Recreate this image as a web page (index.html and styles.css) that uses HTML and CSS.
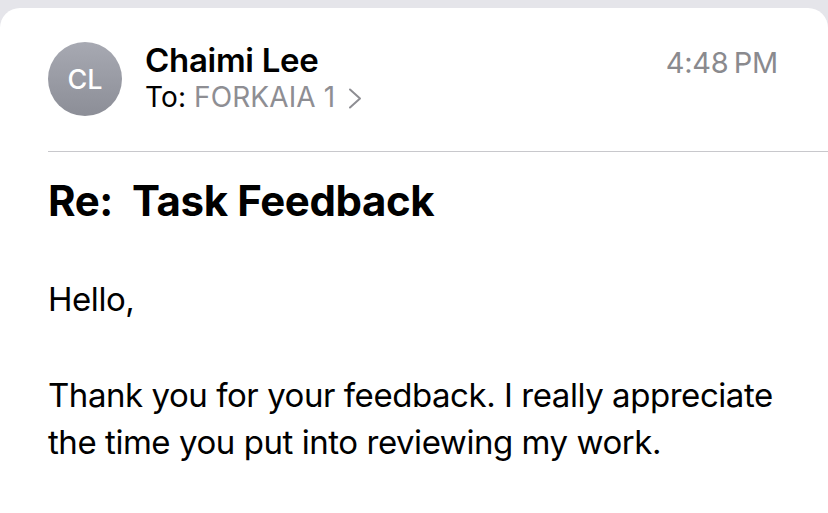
FILE: index.html
```html
<!DOCTYPE html>
<html>
<head>
<meta charset="utf-8">
<link rel="stylesheet" href="styles.css">
</head>
<body>
<div class="card">
  <div class="header">
    <div class="avatar">CL</div>
    <div class="meta">
      <div class="name">Chaimi Lee</div>
      <div class="to">To: <span class="recipient">FORKAIA 1</span><svg class="chev" width="14" height="21" viewBox="0 0 14 21"><path d="M2 1.5 L12 10.5 L2 19.5" fill="none" stroke="#8e8e93" stroke-width="2" stroke-linecap="round" stroke-linejoin="round"/></svg></div>
    </div>
    <div class="time">4:48&#8201;PM</div>
  </div>
  <div class="divider"></div>
  <h1 class="subject">Re:&nbsp; Task Feedback</h1>
  <div class="body">
    <p>Hello,</p>
    <p>Thank you for your feedback. I really appreciate the time you put into reviewing my work.</p>
  </div>
</div>
</body>
</html>
```
FILE: styles.css
```css
html, body {
  margin: 0;
  padding: 0;
  height: 100%;
  background: #e5e5ea;
  font-family: Inter, "Liberation Sans", Arial, sans-serif;
  color: #000;
}
.card {
  margin-top: 8px;
  background: #fff;
  border-radius: 20px 20px 0 0;
  height: calc(100% - 8px);
  box-sizing: border-box;
  overflow: hidden;
}
.header {
  display: flex;
  align-items: flex-start;
  padding: 34px 50px 0 48px;
  height: 108px;
  box-sizing: border-box;
}
.avatar {
  width: 74px;
  height: 74px;
  border-radius: 50%;
  background: linear-gradient(#a7a9b2, #8c8e97);
  color: #fff;
  font-size: 27px;
  font-weight: 500;
  display: flex;
  align-items: center;
  justify-content: center;
  flex: none;
}
.meta {
  margin-left: 23px;
  flex: 1;
  margin-top: -1px;
}
.name {
  font-size: 33px;
  font-weight: 600;
  line-height: 38px;
  letter-spacing: -0.3px;
}
.to {
  font-size: 28px;
  line-height: 34px;
  margin-top: 1px;
  letter-spacing: 0.1px;
  display: flex;
  align-items: center;
}
.recipient {
  color: #8e8e93;
  margin-left: 8px;
}
.chev {
  margin-left: 13px;
  margin-top: 2px;
}
.time {
  font-size: 29px;
  color: #8a8a8e;
  line-height: 36px;
  padding-top: 3px;
  letter-spacing: -0.2px;
}
.divider {
  margin-left: 48px;
  margin-top: 35px;
  border-top: 1px solid #c8c8cc;
}
.subject {
  margin: 24px 0 0 48px;
  font-size: 42px;
  font-weight: 700;
  line-height: 50px;
  letter-spacing: -0.4px;
}
.body {
  margin: 0 48px;
  font-size: 33px;
  line-height: 47px;
  letter-spacing: -0.45px;
}
.body p {
  margin: 0;
}
.body p:first-child {
  margin-top: 50px;
  margin-bottom: 49px;
}
```
